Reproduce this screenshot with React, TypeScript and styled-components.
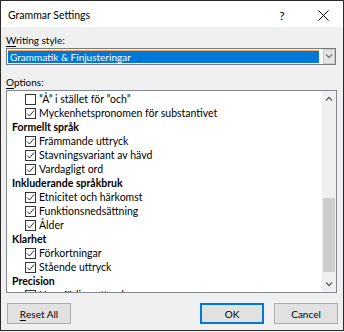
import { FC } from "react";
import styled, { createGlobalStyle } from "styled-components";

const GlobalStyle = createGlobalStyle`
  html, body {
    margin: 0;
    padding: 0;
    background: #f0f0f0;
  }
  body {
    font-family: Lato, "Noto Sans", sans-serif;
    color: #000;
  }
`;

interface Row {
  kind: "heading" | "check";
  label: string;
  checked?: boolean;
}

const rows: Row[] = [
  { kind: "check", label: "\u201DÅ\u201D i stället för \u201Doch\u201D", checked: false },
  { kind: "check", label: "Myckenhetspronomen för substantivet", checked: true },
  { kind: "heading", label: "Formellt språk" },
  { kind: "check", label: "Främmande uttryck", checked: true },
  { kind: "check", label: "Stavningsvariant av hävd", checked: true },
  { kind: "check", label: "Vardagligt ord", checked: true },
  { kind: "heading", label: "Inkluderande språkbruk" },
  { kind: "check", label: "Etnicitet och härkomst", checked: true },
  { kind: "check", label: "Funktionsnedsättning", checked: true },
  { kind: "check", label: "Ålder", checked: true },
  { kind: "heading", label: "Klarhet" },
  { kind: "check", label: "Förkortningar", checked: true },
  { kind: "check", label: "Stående uttryck", checked: true },
  { kind: "heading", label: "Precision" },
  { kind: "check", label: "Ungefärliga uttryck", checked: true },
];

const Chevron: FC<{ dir: "up" | "down"; color?: string }> = ({ dir, color = "#606060" }) => (
  <svg width="8" height="5" viewBox="0 0 8 5">
    <path
      d={dir === "up" ? "M1 4.5 L4 1.5 L7 4.5" : "M1 0.5 L4 3.5 L7 0.5"}
      fill="none"
      stroke={color}
      strokeWidth="1.3"
    />
  </svg>
);

const App: FC = () => {
  return (
    <>
      <GlobalStyle />
      <Window>
        <TitleBar>
          <Title>Grammar Settings</Title>
          <Help>?</Help>
          <Close>
            <svg width="11" height="11" viewBox="0 0 11 11">
              <path d="M0.5 0.5 L10.5 10.5 M10.5 0.5 L0.5 10.5" stroke="#000" strokeWidth="1" />
            </svg>
          </Close>
        </TitleBar>
        <Body>
          <Label>
            <u>W</u>riting style:
          </Label>
          <Combo>
            <ComboValue>Grammatik &amp; Finjusteringar</ComboValue>
            <ComboButton>
              <Chevron dir="down" color="#7a7a7a" />
            </ComboButton>
          </Combo>
          <Label $top={10}>
            <u>O</u>ptions:
          </Label>
          <ListBox>
            <ListItems>
              {rows.map((r, i) =>
                r.kind === "heading" ? (
                  <Heading key={i}>{r.label}</Heading>
                ) : (
                  <CheckRow key={i}>
                    <Box>
                      {r.checked && (
                        <svg width="9" height="9" viewBox="0 0 9 9">
                          <path d="M1 4.5 L3.5 7 L8 1.5" fill="none" stroke="#333" strokeWidth="1" />
                        </svg>
                      )}
                    </Box>
                    <span>{r.label}</span>
                  </CheckRow>
                )
              )}
            </ListItems>
            <ScrollBar>
              <ScrollArrow>
                <Chevron dir="up" />
              </ScrollArrow>
              <Track>
                <Thumb />
              </Track>
              <ScrollArrow>
                <Chevron dir="down" />
              </ScrollArrow>
            </ScrollBar>
          </ListBox>
          <Footer>
            <Button>
              <u>R</u>eset All
            </Button>
            <Spacer />
            <Button $default>OK</Button>
            <Button>Cancel</Button>
          </Footer>
        </Body>
      </Window>
    </>
  );
};

const Window = styled.div`
  width: 344px;
  height: 331px;
  box-sizing: border-box;
  border: 1px solid #2b2b2b;
  background: #f0f0f0;
  display: flex;
  flex-direction: column;
  overflow: hidden;
`;

const TitleBar = styled.div`
  height: 26px;
  background: #fff;
  display: flex;
  align-items: center;
  padding: 0 0 0 7px;
  flex-shrink: 0;
`;

const Title = styled.div`
  flex: 1;
  font-size: 10.5px;
  padding-top: 2px;
`;

const Help = styled.div`
  width: 14px;
  font-size: 12px;
  text-align: center;
  margin-right: 29px;
  padding-top: 2px;
`;

const Close = styled.div`
  width: 11px;
  height: 11px;
  margin-right: 14px;
  display: flex;
  margin-top: 2px;
`;

const Body = styled.div`
  flex: 1;
  display: flex;
  flex-direction: column;
  padding: 6px 6px 0 5px;
`;

const Label = styled.div<{ $top?: number }>`
  font-size: 10px;
  line-height: 14px;
  margin-top: ${(p) => p.$top ?? 0}px;
  margin-bottom: 1px;
  u {
    text-decoration-thickness: 1px;
    text-underline-offset: 2px;
  }
`;

const Combo = styled.div`
  height: 17px;
  box-sizing: border-box;
  border: 1px solid #7a7a7a;
  background: #fff;
  display: flex;
  padding: 1px;
  width: 330px;
`;

const ComboValue = styled.div`
  flex: 1;
  background: #0078d7;
  color: #fff;
  font-size: 10px;
  line-height: 12px;
  padding-left: 2px;
  border-top: 1px solid #f0a060;
  box-sizing: border-box;
  margin-right: 4px;
`;

const ComboButton = styled.div`
  width: 12px;
  background: #e5e5e5;
  border: 1px solid #c8c8c8;
  box-sizing: border-box;
  display: flex;
  align-items: center;
  justify-content: center;
  margin: -1px -1px -1px 0;
  height: 15px;
`;

const ListBox = styled.div`
  width: 331px;
  height: 203px;
  box-sizing: border-box;
  border: 1px solid #828790;
  background: #fff;
  display: flex;
  overflow: hidden;
`;

const ListItems = styled.div`
  flex: 1;
  display: flex;
  flex-direction: column;
  padding: 1px 0 0 5px;
  overflow: hidden;
  font-size: 10.5px;
`;

const Heading = styled.div`
  height: 14px;
  line-height: 14px;
  font-weight: bold;
  flex-shrink: 0;
  white-space: nowrap;
`;

const CheckRow = styled.div`
  height: 14px;
  display: flex;
  align-items: center;
  gap: 3px;
  padding-left: 13px;
  flex-shrink: 0;
  white-space: nowrap;
  line-height: 14px;
`;

const Box = styled.div`
  width: 11px;
  height: 11px;
  box-sizing: border-box;
  border: 1px solid #333;
  background: #fff;
  display: flex;
  align-items: center;
  justify-content: center;
  flex-shrink: 0;
`;

const ScrollBar = styled.div`
  width: 14px;
  background: #f0f0f0;
  display: flex;
  flex-direction: column;
  flex-shrink: 0;
`;

const ScrollArrow = styled.div`
  height: 15px;
  display: flex;
  align-items: center;
  justify-content: center;
  flex-shrink: 0;
`;

const Track = styled.div`
  flex: 1;
  position: relative;
`;

const Thumb = styled.div`
  position: absolute;
  left: 1px;
  right: 1px;
  top: 92px;
  height: 74px;
  background: #cdcdcd;
`;

const Footer = styled.div`
  display: flex;
  gap: 10px;
  margin-top: 10px;
  padding-left: 1px;
  width: 331px;
`;

const Spacer = styled.div`
  flex: 1;
`;

const Button = styled.div<{ $default?: boolean }>`
  width: 64px;
  height: 21px;
  box-sizing: border-box;
  background: #e1e1e1;
  border: ${(p) => (p.$default ? "2px solid #0078d7" : "1px solid #adadad")};
  font-size: 10px;
  display: flex;
  align-items: center;
  justify-content: center;
  u {
    text-underline-offset: 2px;
  }
`;

export default App;
